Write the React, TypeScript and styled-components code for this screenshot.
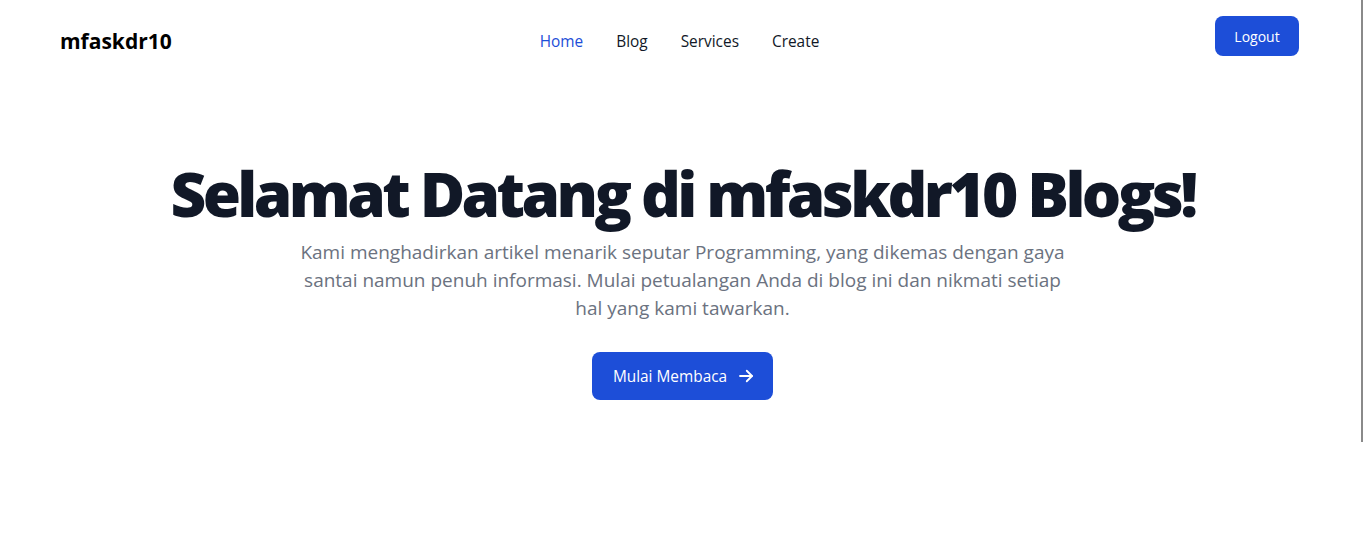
import React from "react";
import styled, { createGlobalStyle } from "styled-components";

const Global = createGlobalStyle`
  html, body { margin: 0; padding: 0; background: #ffffff; }
  body { font-family: "Open Sans", "Noto Sans", sans-serif; color: #111827; overflow: hidden; }
  * { box-sizing: border-box; }
`;

const Page = styled.div`
  position: relative;
  width: 1365px;
  height: 535px;
  background: #fff;
`;

const Header = styled.header`
  display: grid;
  grid-template-columns: 1fr auto 1fr;
  align-items: start;
  padding: 0 66px 0 60px;
  height: 84px;
`;

const Logo = styled.div`
  font-size: 21px;
  font-weight: 700;
  color: #000;
  line-height: 30px;
  margin-top: 26px;
`;

const Nav = styled.nav`
  display: flex;
  gap: 33px;
  margin-top: 31px;
`;

const NavLink = styled.a<{ $active?: boolean }>`
  font-size: 15.4px;
  line-height: 22px;
  color: ${(p) => (p.$active ? "#1d4ed8" : "#111827")};
  text-decoration: none;
`;

const Right = styled.div`
  display: flex;
  justify-content: flex-end;
  padding-top: 16px;
`;

const LogoutButton = styled.button`
  width: 84px;
  height: 40px;
  border: none;
  border-radius: 8px;
  background: #1d4ed8;
  color: #fff;
  font-family: inherit;
  font-size: 14px;
`;

const Hero = styled.section`
  display: flex;
  flex-direction: column;
  align-items: center;
  text-align: center;
  padding-top: 67px;
`;

const Title = styled.h1`
  margin: 0;
  font-size: 62px;
  font-weight: 800;
  line-height: 84px;
  letter-spacing: -3.6px;
  color: #111827;
`;

const Lead = styled.p`
  margin: 3px 0 0;
  max-width: 768px;
  font-size: 19px;
  line-height: 28px;
  color: #6b7280;
`;

const CTA = styled.button`
  margin-top: 30px;
  display: flex;
  align-items: center;
  gap: 10px;
  height: 48px;
  padding: 0 18px 0 21px;
  border: none;
  border-radius: 8px;
  background: #1d4ed8;
  color: #fff;
  font-family: inherit;
  font-size: 15.4px;
`;

const ScrollThumb = styled.div`
  position: absolute;
  right: 2px;
  top: 0;
  width: 2px;
  height: 442px;
  background: #8a8a8a;
`;

export default function App() {
  return (
    <Page>
      <Global />
      <Header>
        <Logo>mfaskdr10</Logo>
        <Nav>
          <NavLink $active href="#">Home</NavLink>
          <NavLink href="#">Blog</NavLink>
          <NavLink href="#">Services</NavLink>
          <NavLink href="#">Create</NavLink>
        </Nav>
        <Right>
          <LogoutButton>Logout</LogoutButton>
        </Right>
      </Header>
      <Hero>
        <Title>Selamat Datang di mfaskdr10 Blogs!</Title>
        <Lead>
          Kami menghadirkan artikel menarik seputar Programming, yang dikemas dengan gaya santai namun penuh
          informasi. Mulai petualangan Anda di blog ini dan nikmati setiap hal yang kami tawarkan.
        </Lead>
        <CTA>
          Mulai Membaca
          <svg width="18" height="18" viewBox="0 0 24 24" fill="none" stroke="currentColor" strokeWidth="2.4" strokeLinecap="round" strokeLinejoin="round">
            <path d="M4 12h16" />
            <path d="M13 5l7 7-7 7" />
          </svg>
        </CTA>
      </Hero>
      <ScrollThumb />
    </Page>
  );
}
